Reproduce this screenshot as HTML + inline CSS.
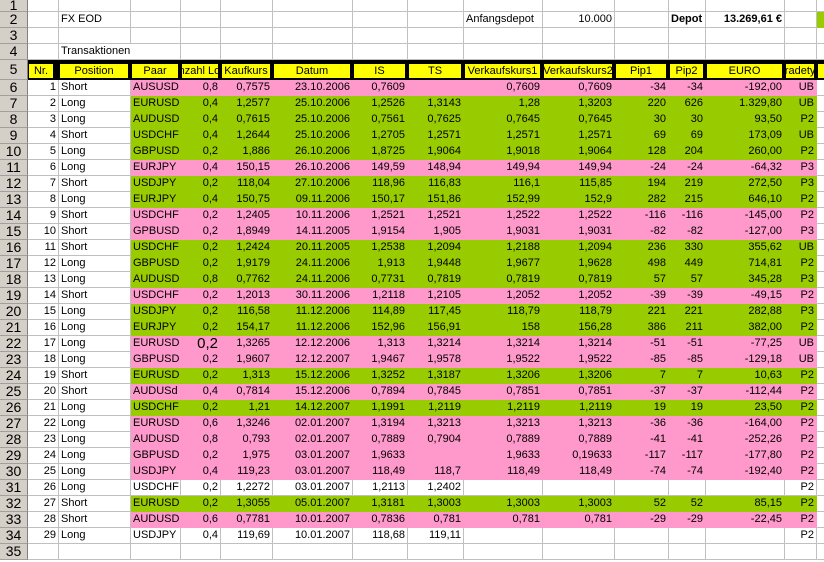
<!DOCTYPE html>
<html><head><meta charset="utf-8"><style>
html,body{margin:0;padding:0;background:#fff;width:824px;height:562px;overflow:hidden}
table{border-collapse:separate;border-spacing:0;table-layout:fixed;width:1000px;font:11px "Liberation Sans",Arial,sans-serif;color:#000}
td{box-sizing:border-box;border-right:1px solid #c0c0c0;border-bottom:1px solid #c0c0c0;padding:0 2px;white-space:nowrap;overflow:visible;height:16px;line-height:15px;text-align:right;vertical-align:bottom}
td.h{background:#d4d0c8;border-right:1px solid #808080;border-bottom:1px solid #a0a0a0;text-align:center;font-size:14px;line-height:15px;padding:0;color:#000}
td.l{text-align:left}
tr.r1 td{height:12px;line-height:11px}
tr.r5 td{height:20px;background:#000;border:none;padding:0}
tr.r5 td.h{background:#d4d0c8;border-right:1px solid #808080;border-bottom:1px solid #a0a0a0;vertical-align:middle}
tr.r5 td div{background:#ff0;height:14px;margin:4px 3px 2px 1px;display:flex;justify-content:center;overflow:hidden;line-height:14px;font-size:11px}
td.p{background:#ff99cc;border-color:#ff99cc}
td.g{background:#99cc00;border-color:#99cc00}
td.b{font-weight:bold}
</style></head><body>
<table>
<colgroup><col style="width:28px"><col style="width:31px"><col style="width:72px"><col style="width:50px"><col style="width:40px"><col style="width:52px"><col style="width:80px"><col style="width:55px"><col style="width:56px"><col style="width:79px"><col style="width:72px"><col style="width:54px"><col style="width:37px"><col style="width:79px"><col style="width:32px"><col style="width:183px"></colgroup>
<tr class="r1"><td class="h">1</td><td></td><td></td><td></td><td></td><td></td><td></td><td></td><td></td><td></td><td></td><td></td><td></td><td></td><td></td><td></td></tr>
<tr><td class="h">2</td><td></td><td class="l">FX EOD</td><td></td><td></td><td></td><td></td><td></td><td></td><td class="l">Anfangsdepot</td><td>10.000</td><td></td><td class="l b">Depot</td><td class="b">13.269,61 €</td><td></td><td class="g"></td></tr>
<tr><td class="h">3</td><td></td><td></td><td></td><td></td><td></td><td></td><td></td><td></td><td></td><td></td><td></td><td></td><td></td><td></td><td></td></tr>
<tr><td class="h">4</td><td></td><td class="l" style="border-right:none">Transaktionen</td><td></td><td></td><td></td><td></td><td></td><td></td><td></td><td></td><td></td><td></td><td></td><td></td><td></td></tr>
<tr class="r5"><td class="h">5</td><td><div style="margin-right:6px">Nr.</div></td><td><div>Position</div></td><td><div>Paar</div></td><td><div>Anzahl Lots</div></td><td><div>Kaufkurs</div></td><td><div>Datum</div></td><td><div>IS</div></td><td><div>TS</div></td><td><div>Verkaufskurs1</div></td><td><div>Verkaufskurs2</div></td><td><div>Pip1</div></td><td><div>Pip2</div></td><td><div>EURO</div></td><td><div>Tradetyp</div></td><td><div style="margin-right:0"></div></td></tr>
<tr><td class="h">6</td><td>1</td><td class="l">Short</td><td class="l p">AUSUSD</td><td class="p">0,8</td><td class="p">0,7575</td><td class="p">23.10.2006</td><td class="p">0,7609</td><td class="p"></td><td class="p">0,7609</td><td class="p">0,7609</td><td class="p">-34</td><td class="p">-34</td><td class="p">-192,00</td><td class="p">UB</td><td></td></tr>
<tr><td class="h">7</td><td>2</td><td class="l">Long</td><td class="l g">EURUSD</td><td class="g">0,4</td><td class="g">1,2577</td><td class="g">25.10.2006</td><td class="g">1,2526</td><td class="g">1,3143</td><td class="g">1,28</td><td class="g">1,3203</td><td class="g">220</td><td class="g">626</td><td class="g">1.329,80</td><td class="g">UB</td><td></td></tr>
<tr><td class="h">8</td><td>3</td><td class="l">Long</td><td class="l g">AUDUSD</td><td class="g">0,4</td><td class="g">0,7615</td><td class="g">25.10.2006</td><td class="g">0,7561</td><td class="g">0,7625</td><td class="g">0,7645</td><td class="g">0,7645</td><td class="g">30</td><td class="g">30</td><td class="g">93,50</td><td class="g">P2</td><td></td></tr>
<tr><td class="h">9</td><td>4</td><td class="l">Short</td><td class="l g">USDCHF</td><td class="g">0,4</td><td class="g">1,2644</td><td class="g">25.10.2006</td><td class="g">1,2705</td><td class="g">1,2571</td><td class="g">1,2571</td><td class="g">1,2571</td><td class="g">69</td><td class="g">69</td><td class="g">173,09</td><td class="g">UB</td><td></td></tr>
<tr><td class="h">10</td><td>5</td><td class="l">Long</td><td class="l g">GBPUSD</td><td class="g">0,2</td><td class="g">1,886</td><td class="g">26.10.2006</td><td class="g">1,8725</td><td class="g">1,9064</td><td class="g">1,9018</td><td class="g">1,9064</td><td class="g">128</td><td class="g">204</td><td class="g">260,00</td><td class="g">P2</td><td></td></tr>
<tr><td class="h">11</td><td>6</td><td class="l">Long</td><td class="l p">EURJPY</td><td class="p">0,4</td><td class="p">150,15</td><td class="p">26.10.2006</td><td class="p">149,59</td><td class="p">148,94</td><td class="p">149,94</td><td class="p">149,94</td><td class="p">-24</td><td class="p">-24</td><td class="p">-64,32</td><td class="p">P3</td><td></td></tr>
<tr><td class="h">12</td><td>7</td><td class="l">Short</td><td class="l g">USDJPY</td><td class="g">0,2</td><td class="g">118,04</td><td class="g">27.10.2006</td><td class="g">118,96</td><td class="g">116,83</td><td class="g">116,1</td><td class="g">115,85</td><td class="g">194</td><td class="g">219</td><td class="g">272,50</td><td class="g">P3</td><td></td></tr>
<tr><td class="h">13</td><td>8</td><td class="l">Long</td><td class="l g">EURJPY</td><td class="g">0,4</td><td class="g">150,75</td><td class="g">09.11.2006</td><td class="g">150,17</td><td class="g">151,86</td><td class="g">152,99</td><td class="g">152,9</td><td class="g">282</td><td class="g">215</td><td class="g">646,10</td><td class="g">P2</td><td></td></tr>
<tr><td class="h">14</td><td>9</td><td class="l">Short</td><td class="l p">USDCHF</td><td class="p">0,2</td><td class="p">1,2405</td><td class="p">10.11.2006</td><td class="p">1,2521</td><td class="p">1,2521</td><td class="p">1,2522</td><td class="p">1,2522</td><td class="p">-116</td><td class="p">-116</td><td class="p">-145,00</td><td class="p">P2</td><td></td></tr>
<tr><td class="h">15</td><td>10</td><td class="l">Short</td><td class="l p">GPBUSD</td><td class="p">0,2</td><td class="p">1,8949</td><td class="p">14.11.2005</td><td class="p">1,9154</td><td class="p">1,905</td><td class="p">1,9031</td><td class="p">1,9031</td><td class="p">-82</td><td class="p">-82</td><td class="p">-127,00</td><td class="p">P3</td><td></td></tr>
<tr><td class="h">16</td><td>11</td><td class="l">Short</td><td class="l g">USDCHF</td><td class="g">0,2</td><td class="g">1,2424</td><td class="g">20.11.2005</td><td class="g">1,2538</td><td class="g">1,2094</td><td class="g">1,2188</td><td class="g">1,2094</td><td class="g">236</td><td class="g">330</td><td class="g">355,62</td><td class="g">UB</td><td></td></tr>
<tr><td class="h">17</td><td>12</td><td class="l">Long</td><td class="l g">GBPUSD</td><td class="g">0,2</td><td class="g">1,9179</td><td class="g">24.11.2006</td><td class="g">1,913</td><td class="g">1,9448</td><td class="g">1,9677</td><td class="g">1,9628</td><td class="g">498</td><td class="g">449</td><td class="g">714,81</td><td class="g">P2</td><td></td></tr>
<tr><td class="h">18</td><td>13</td><td class="l">Long</td><td class="l g">AUDUSD</td><td class="g">0,8</td><td class="g">0,7762</td><td class="g">24.11.2006</td><td class="g">0,7731</td><td class="g">0,7819</td><td class="g">0,7819</td><td class="g">0,7819</td><td class="g">57</td><td class="g">57</td><td class="g">345,28</td><td class="g">P3</td><td></td></tr>
<tr><td class="h">19</td><td>14</td><td class="l">Short</td><td class="l p">USDCHF</td><td class="p">0,2</td><td class="p">1,2013</td><td class="p">30.11.2006</td><td class="p">1,2118</td><td class="p">1,2105</td><td class="p">1,2052</td><td class="p">1,2052</td><td class="p">-39</td><td class="p">-39</td><td class="p">-49,15</td><td class="p">P2</td><td></td></tr>
<tr><td class="h">20</td><td>15</td><td class="l">Long</td><td class="l g">USDJPY</td><td class="g">0,2</td><td class="g">116,58</td><td class="g">11.12.2006</td><td class="g">114,89</td><td class="g">117,45</td><td class="g">118,79</td><td class="g">118,79</td><td class="g">221</td><td class="g">221</td><td class="g">282,88</td><td class="g">P3</td><td></td></tr>
<tr><td class="h">21</td><td>16</td><td class="l">Long</td><td class="l g">EURJPY</td><td class="g">0,2</td><td class="g">154,17</td><td class="g">11.12.2006</td><td class="g">152,96</td><td class="g">156,91</td><td class="g">158</td><td class="g">156,28</td><td class="g">386</td><td class="g">211</td><td class="g">382,00</td><td class="g">P2</td><td></td></tr>
<tr><td class="h">22</td><td>17</td><td class="l">Long</td><td class="l p">EURUSD</td><td class="p" style="font-size:15px">0,2</td><td class="p">1,3265</td><td class="p">12.12.2006</td><td class="p">1,313</td><td class="p">1,3214</td><td class="p">1,3214</td><td class="p">1,3214</td><td class="p">-51</td><td class="p">-51</td><td class="p">-77,25</td><td class="p">UB</td><td></td></tr>
<tr><td class="h">23</td><td>18</td><td class="l">Long</td><td class="l p">GBPUSD</td><td class="p">0,2</td><td class="p">1,9607</td><td class="p">12.12.2007</td><td class="p">1,9467</td><td class="p">1,9578</td><td class="p">1,9522</td><td class="p">1,9522</td><td class="p">-85</td><td class="p">-85</td><td class="p">-129,18</td><td class="p">UB</td><td></td></tr>
<tr><td class="h">24</td><td>19</td><td class="l">Short</td><td class="l g">EURUSD</td><td class="g">0,2</td><td class="g">1,313</td><td class="g">15.12.2006</td><td class="g">1,3252</td><td class="g">1,3187</td><td class="g">1,3206</td><td class="g">1,3206</td><td class="g">7</td><td class="g">7</td><td class="g">10,63</td><td class="g">P2</td><td></td></tr>
<tr><td class="h">25</td><td>20</td><td class="l">Short</td><td class="l p">AUDUSd</td><td class="p">0,4</td><td class="p">0,7814</td><td class="p">15.12.2006</td><td class="p">0,7894</td><td class="p">0,7845</td><td class="p">0,7851</td><td class="p">0,7851</td><td class="p">-37</td><td class="p">-37</td><td class="p">-112,44</td><td class="p">P2</td><td></td></tr>
<tr><td class="h">26</td><td>21</td><td class="l">Long</td><td class="l g">USDCHF</td><td class="g">0,2</td><td class="g">1,21</td><td class="g">14.12.2007</td><td class="g">1,1991</td><td class="g">1,2119</td><td class="g">1,2119</td><td class="g">1,2119</td><td class="g">19</td><td class="g">19</td><td class="g">23,50</td><td class="g">P2</td><td></td></tr>
<tr><td class="h">27</td><td>22</td><td class="l">Long</td><td class="l p">EURUSD</td><td class="p">0,6</td><td class="p">1,3246</td><td class="p">02.01.2007</td><td class="p">1,3194</td><td class="p">1,3213</td><td class="p">1,3213</td><td class="p">1,3213</td><td class="p">-36</td><td class="p">-36</td><td class="p">-164,00</td><td class="p">P2</td><td></td></tr>
<tr><td class="h">28</td><td>23</td><td class="l">Long</td><td class="l p">AUDUSD</td><td class="p">0,8</td><td class="p">0,793</td><td class="p">02.01.2007</td><td class="p">0,7889</td><td class="p">0,7904</td><td class="p">0,7889</td><td class="p">0,7889</td><td class="p">-41</td><td class="p">-41</td><td class="p">-252,26</td><td class="p">P2</td><td></td></tr>
<tr><td class="h">29</td><td>24</td><td class="l">Long</td><td class="l p">GBPUSD</td><td class="p">0,2</td><td class="p">1,975</td><td class="p">03.01.2007</td><td class="p">1,9633</td><td class="p"></td><td class="p">1,9633</td><td class="p">0,19633</td><td class="p">-117</td><td class="p">-117</td><td class="p">-177,80</td><td class="p">P2</td><td></td></tr>
<tr><td class="h">30</td><td>25</td><td class="l">Long</td><td class="l p">USDJPY</td><td class="p">0,4</td><td class="p">119,23</td><td class="p">03.01.2007</td><td class="p">118,49</td><td class="p">118,7</td><td class="p">118,49</td><td class="p">118,49</td><td class="p">-74</td><td class="p">-74</td><td class="p">-192,40</td><td class="p">P2</td><td></td></tr>
<tr><td class="h">31</td><td>26</td><td class="l">Long</td><td class="l">USDCHF</td><td>0,2</td><td>1,2272</td><td>03.01.2007</td><td>1,2113</td><td>1,2402</td><td></td><td></td><td></td><td></td><td></td><td>P2</td><td></td></tr>
<tr><td class="h">32</td><td>27</td><td class="l">Short</td><td class="l g">EURUSD</td><td class="g">0,2</td><td class="g">1,3055</td><td class="g">05.01.2007</td><td class="g">1,3181</td><td class="g">1,3003</td><td class="g">1,3003</td><td class="g">1,3003</td><td class="g">52</td><td class="g">52</td><td class="g">85,15</td><td class="g">P2</td><td></td></tr>
<tr><td class="h">33</td><td>28</td><td class="l">Short</td><td class="l p">AUDUSD</td><td class="p">0,6</td><td class="p">0,7781</td><td class="p">10.01.2007</td><td class="p">0,7836</td><td class="p">0,781</td><td class="p">0,781</td><td class="p">0,781</td><td class="p">-29</td><td class="p">-29</td><td class="p">-22,45</td><td class="p">P2</td><td></td></tr>
<tr><td class="h">34</td><td>29</td><td class="l">Long</td><td class="l">USDJPY</td><td>0,4</td><td>119,69</td><td>10.01.2007</td><td>118,68</td><td>119,11</td><td></td><td></td><td></td><td></td><td></td><td>P2</td><td></td></tr>
<tr><td class="h">35</td><td></td><td></td><td></td><td></td><td></td><td></td><td></td><td></td><td></td><td></td><td></td><td></td><td></td><td></td><td></td></tr>
</table>
</body></html>
